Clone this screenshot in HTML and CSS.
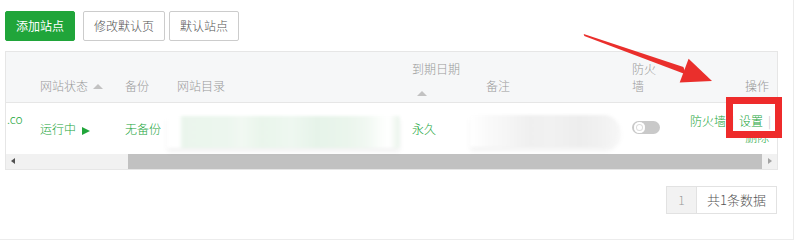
FILE: index.html
```html
<!DOCTYPE html>
<html lang="zh-CN">
<head>
<meta charset="utf-8">
<title>网站</title>
<link rel="stylesheet" href="styles.css">
</head>
<body>
<div class="page">
  <div class="toolbar">
    <button class="btn btn-primary">添加站点</button>
    <button class="btn btn-gap">修改默认页</button>
    <button class="btn">默认站点</button>
  </div>

  <div class="table">
    <div class="row head">
      <div class="cell"></div>
      <div class="cell">网站状态<span class="sort"></span></div>
      <div class="cell">备份</div>
      <div class="cell">网站目录</div>
      <div class="cell stack"><span>到期日期</span><span class="sort sort-block"></span></div>
      <div class="cell">备注</div>
      <div class="cell wrap">防火墙</div>
      <div class="cell right">操作</div>
    </div>
    <div class="row body">
      <div class="cell green top">.co</div>
      <div class="cell green">运行中<span class="play"></span></div>
      <div class="cell green">无备份</div>
      <div class="cell"><div class="blur blur-path"></div></div>
      <div class="cell green">永久</div>
      <div class="cell"><div class="blur blur-note"></div></div>
      <div class="cell"><span class="switch"><span class="knob"></span></span></div>
      <div class="cell right ops">
        <div><a class="link">防火墙</a><span class="sep">|</span><a class="link">设置</a><span class="sep last">|</span></div>
        <div><a class="link del">删除</a></div>
      </div>
    </div>
    <div class="hscroll">
      <span class="sbtn"><span class="arr-left"></span></span>
      <span class="track"><span class="thumb"></span></span>
      <span class="sbtn"><span class="arr-right"></span></span>
    </div>
  </div>

  <div class="pager">
    <span class="pg-cur">1</span>
    <span class="pg-total">共1条数据</span>
  </div>

  <svg class="arrow" width="795" height="242" viewBox="0 0 795 242">
    <polygon points="583.7,34.1 584.3,35.9 686.2,74.4 683.4,66.9" fill="#ea2f2c"/>
    <polygon points="712,81 679.7,82.5 688.6,58.8" fill="#ea2f2c"/>
  </svg>
  <div class="highlight"></div>
</div>
</body>
</html>
```

FILE: styles.css
```css
* { box-sizing: border-box; }

html, body {
  margin: 0;
  padding: 0;
  background: #fff;
}

body {
  font-family: "Noto Sans CJK SC", "Liberation Sans", sans-serif;
  font-size: 12px;
  font-weight: 300;
  color: #666;
}

.page {
  position: relative;
  width: 794px;
  height: 240px;
  padding: 11px 15px 0 5px;
  border-right: 1px solid #ececec;
  border-bottom: 1px solid #ececec;
}

.toolbar {
  display: flex;
  margin-bottom: 10px;
}

.btn {
  height: 30px;
  padding: 0 10px;
  font-family: inherit;
  font-size: 12px;
  font-weight: 300;
  line-height: 28px;
  color: #555;
  background: #fff;
  border: 1px solid #ccc;
  border-radius: 2px;
  margin-right: 4px;
}

.btn-primary {
  width: 70px;
  color: #fff;
  font-weight: 400;
  background: #20a53a;
  border-color: #20a53a;
  margin-right: 8px;
}

.btn-gap { width: 82px; }

.table {
  width: 773px;
  border: 1px solid #e6e6e6;
}

.row {
  display: grid;
  grid-template-columns: 34px 85px 52px 235px 74px 146px 58px 1fr;
}

.head {
  height: 51px;
  background: #f6f7f8;
  border-bottom: 1px solid #e6e6e6;
  color: #999;
  align-items: end;
}

.head .cell {
  line-height: 20px;
  padding-bottom: 6px;
  white-space: nowrap;
}

.head .stack {
  display: flex;
  flex-direction: column;
  padding-bottom: 6px;
}

.head .wrap {
  white-space: normal;
  width: 27px;
  line-height: 17px;
  padding-bottom: 8px;
}

.cell.right {
  text-align: right;
  padding-right: 8px;
}

.sort {
  display: inline-block;
  width: 0;
  height: 0;
  border-left: 5px solid transparent;
  border-right: 5px solid transparent;
  border-bottom: 5px solid #c2c2c2;
  margin-left: 5px;
  vertical-align: 2px;
}

.sort-block {
  display: block;
  margin: 12px 0 0 5px;
}

.body {
  height: 51px;
  align-items: center;
}

.body .cell {
  line-height: 20px;
  white-space: nowrap;
}

.green { color: #20a53a; }

.cell.top {
  align-self: start;
  padding-top: 6px;
  padding-left: 1px;
  line-height: 20px;
}

.play {
  display: inline-block;
  width: 0;
  height: 0;
  border-top: 4.5px solid transparent;
  border-bottom: 4.5px solid transparent;
  border-left: 8px solid #20a53a;
  margin-left: 6px;
  vertical-align: -1px;
}

.blur {
  height: 32px;
  filter: blur(1.5px);
  box-shadow: 0 4px 4px rgba(0, 0, 0, 0.05);
  border-radius: 2px;
}

.blur-path {
  width: 233px;
  margin-left: -10px;
  margin-top: 6px;
  background: linear-gradient(90deg, #fff 0, #fff 12px, #eaf5ec 16px, #ecf6ee 60px, #f1f8f2 75px, #e9f5eb 95px, #eef7f0 125px, #e6f3e9 150px, #eaf5ec 180px, #f1f8f2 200px, #fafdfa 212px, #fff 222px, #eef6ef 230px);
}

.blur-note {
  width: 150px;
  margin-left: -16px;
  margin-top: 4px;
  background: linear-gradient(90deg, #fff 0, #f9f9f9 20px, #f6f6f6 35px, #efefef 60px, #f1f1f1 80px, #ededed 110px, #f2f2f2 135px, #f7f7f7 150px);
  border-radius: 2px 16px 16px 2px;
}

.switch {
  display: block;
  position: relative;
  width: 28px;
  height: 13px;
  margin-top: -3px;
  border-radius: 7px;
  background: #c9c9c9;
}

.knob {
  position: absolute;
  left: 2px;
  top: 1px;
  width: 11px;
  height: 11px;
  border-radius: 50%;
  background: #fff;
  box-shadow: inset 0 0 0 2px #fff, inset 0 0 0 3px #dcdcdc;
}

.ops {
  padding-right: 6px;
}

.body .ops div { line-height: 16px; }

.link {
  color: #20a53a;
}

.sep {
  color: #bdbdbd;
  margin: 0 5px;
}

.sep.last { margin-right: 0; }

.del { margin-right: 2px; }

.hscroll {
  display: flex;
  height: 15px;
  background: #f1f1f1;
}

.sbtn {
  position: relative;
  width: 15px;
  height: 15px;
  flex: none;
}

.track {
  flex: 1;
  display: flex;
  justify-content: flex-end;
}

.thumb {
  width: 634px;
  height: 15px;
  background: #c1c1c1;
}

.arr-left, .arr-right {
  position: absolute;
  top: 4px;
  width: 0;
  height: 0;
  border-top: 3.5px solid transparent;
  border-bottom: 3.5px solid transparent;
}

.arr-left {
  left: 5px;
  border-right: 4px solid #505050;
}

.arr-right {
  left: 6px;
  border-left: 4px solid #a3a3a3;
}

.pager {
  display: flex;
  justify-content: flex-end;
  width: 772px;
  margin-top: 16px;
}

.pg-cur, .pg-total {
  height: 28px;
  line-height: 26px;
  border: 1px solid #e2e2e2;
}

.pg-cur {
  width: 31px;
  text-align: center;
  background: #f2f2f2;
  color: #999;
}

.pg-total {
  padding: 0 10px;
  border-left: none;
  font-size: 13px;
  color: #555;
}

.arrow {
  position: absolute;
  left: 0;
  top: 0;
  pointer-events: none;
}

.highlight {
  position: absolute;
  left: 726px;
  top: 97px;
  width: 56px;
  height: 41px;
  border: 7px solid #ee2b2b;
}
```
